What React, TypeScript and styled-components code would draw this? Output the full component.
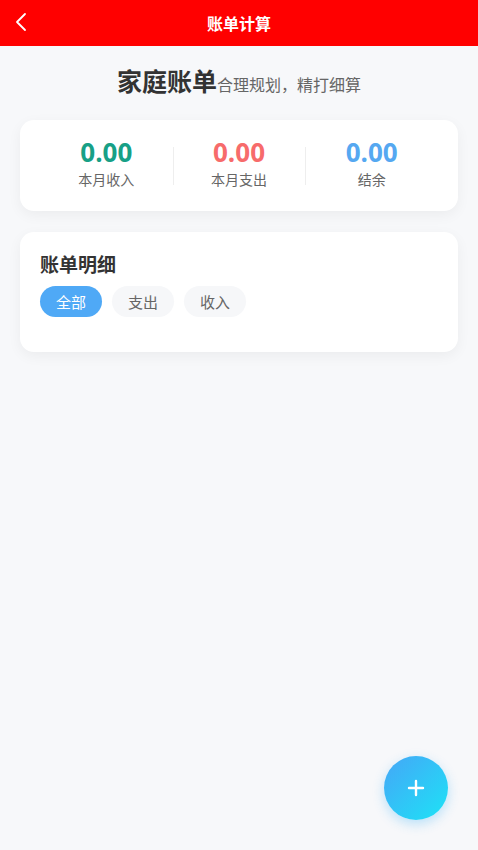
import { useState } from "react";
import styled, { createGlobalStyle } from "styled-components";

const GlobalStyle = createGlobalStyle`
  html, body {
    margin: 0;
    padding: 0;
    background: #f7f8fa;
    font-family: "Noto Sans CJK SC", "Noto Sans", "Liberation Sans", sans-serif;
  }
  * { box-sizing: border-box; }
`;

const Page = styled.div`
  min-height: 850px;
  background: #f7f8fa;
  display: flex;
  flex-direction: column;
`;

const NavBar = styled.div`
  height: 46px;
  background: #ff0000;
  display: flex;
  align-items: center;
  justify-content: center;
  position: relative;
`;

const BackButton = styled.div`
  position: absolute;
  left: 12px;
  top: 10px;
  width: 18px;
  height: 24px;
  display: flex;
  align-items: center;
  justify-content: center;
`;

const NavTitle = styled.div`
  color: #fff;
  font-size: 16px;
  font-weight: 700;
`;

const Content = styled.div`
  padding: 0 20px;
  display: flex;
  flex-direction: column;
`;

const Heading = styled.div`
  display: flex;
  justify-content: center;
  align-items: baseline;
  padding: 17px 0 23px;
`;

const HeadingMain = styled.span`
  font-size: 25px;
  font-weight: 700;
  color: #333;
  line-height: 34px;
`;

const HeadingSub = styled.span`
  font-size: 16px;
  color: #666;
`;

const Card = styled.div`
  background: #fff;
  border-radius: 14px;
  box-shadow: 0 4px 14px rgba(0, 0, 0, 0.05);
`;

const StatsCard = styled(Card)`
  display: flex;
  align-items: flex-start;
  padding: 15px 20px 0;
  height: 91px;
`;

const Stat = styled.div`
  flex: 1;
  display: flex;
  flex-direction: column;
  align-items: center;
  position: relative;
  & + &::before {
    content: "";
    position: absolute;
    left: 0;
    top: 12px;
    bottom: 4px;
    width: 1px;
    background: #eeeeee;
  }
`;

const StatValue = styled.div<{ $color: string }>`
  font-family: "Open Sans", "Liberation Sans", sans-serif;
  font-size: 26px;
  font-weight: 700;
  line-height: 34px;
  color: ${(p) => p.$color};
`;

const StatLabel = styled.div`
  font-size: 14px;
  color: #666;
  line-height: 20px;
`;

const DetailCard = styled(Card)`
  margin-top: 21px;
  padding: 18px 20px 35px;
`;

const DetailTitle = styled.div`
  font-size: 19px;
  font-weight: 700;
  color: #333;
  line-height: 28px;
  margin-bottom: 8px;
`;

const Tabs = styled.div`
  display: flex;
  gap: 10px;
`;

const Tab = styled.div<{ $active: boolean }>`
  width: 62px;
  height: 31px;
  border-radius: 16px;
  display: flex;
  align-items: center;
  justify-content: center;
  font-size: 15px;
  cursor: pointer;
  background: ${(p) => (p.$active ? "#4fa9f6" : "#f6f7f9")};
  color: ${(p) => (p.$active ? "#fff" : "#666")};
`;

const Fab = styled.div`
  position: fixed;
  left: 384px;
  top: 756px;
  width: 64px;
  height: 64px;
  border-radius: 50%;
  background: linear-gradient(135deg, #45a6f7 0%, #1de3f6 100%);
  box-shadow: 0 4px 12px rgba(40, 170, 250, 0.3);
  display: flex;
  align-items: center;
  justify-content: center;
`;

const stats = [
  { value: "0.00", label: "本月收入", color: "#17a086" },
  { value: "0.00", label: "本月支出", color: "#f76b6b" },
  { value: "0.00", label: "结余", color: "#55a8f1" },
];

const tabs = ["全部", "支出", "收入"];

export default function App() {
  const [active, setActive] = useState(0);
  return (
    <Page>
      <GlobalStyle />
      <NavBar>
        <BackButton>
          <svg width="12" height="20" viewBox="0 0 12 20" fill="none">
            <path d="M10 2 L2 10 L10 18" stroke="#fff" strokeWidth="1.8" strokeLinecap="round" strokeLinejoin="round" />
          </svg>
        </BackButton>
        <NavTitle>账单计算</NavTitle>
      </NavBar>
      <Content>
        <Heading>
          <HeadingMain>家庭账单</HeadingMain>
          <HeadingSub>合理规划，精打细算</HeadingSub>
        </Heading>
        <StatsCard>
          {stats.map((s) => (
            <Stat key={s.label}>
              <StatValue $color={s.color}>{s.value}</StatValue>
              <StatLabel>{s.label}</StatLabel>
            </Stat>
          ))}
        </StatsCard>
        <DetailCard>
          <DetailTitle>账单明细</DetailTitle>
          <Tabs>
            {tabs.map((t, i) => (
              <Tab key={t} $active={i === active} onClick={() => setActive(i)}>
                {t}
              </Tab>
            ))}
          </Tabs>
        </DetailCard>
      </Content>
      <Fab>
        <svg width="18" height="18" viewBox="0 0 18 18">
          <path d="M9 2 V16 M2 9 H16" stroke="#fff" strokeWidth="2.4" strokeLinecap="round" />
        </svg>
      </Fab>
    </Page>
  );
}
